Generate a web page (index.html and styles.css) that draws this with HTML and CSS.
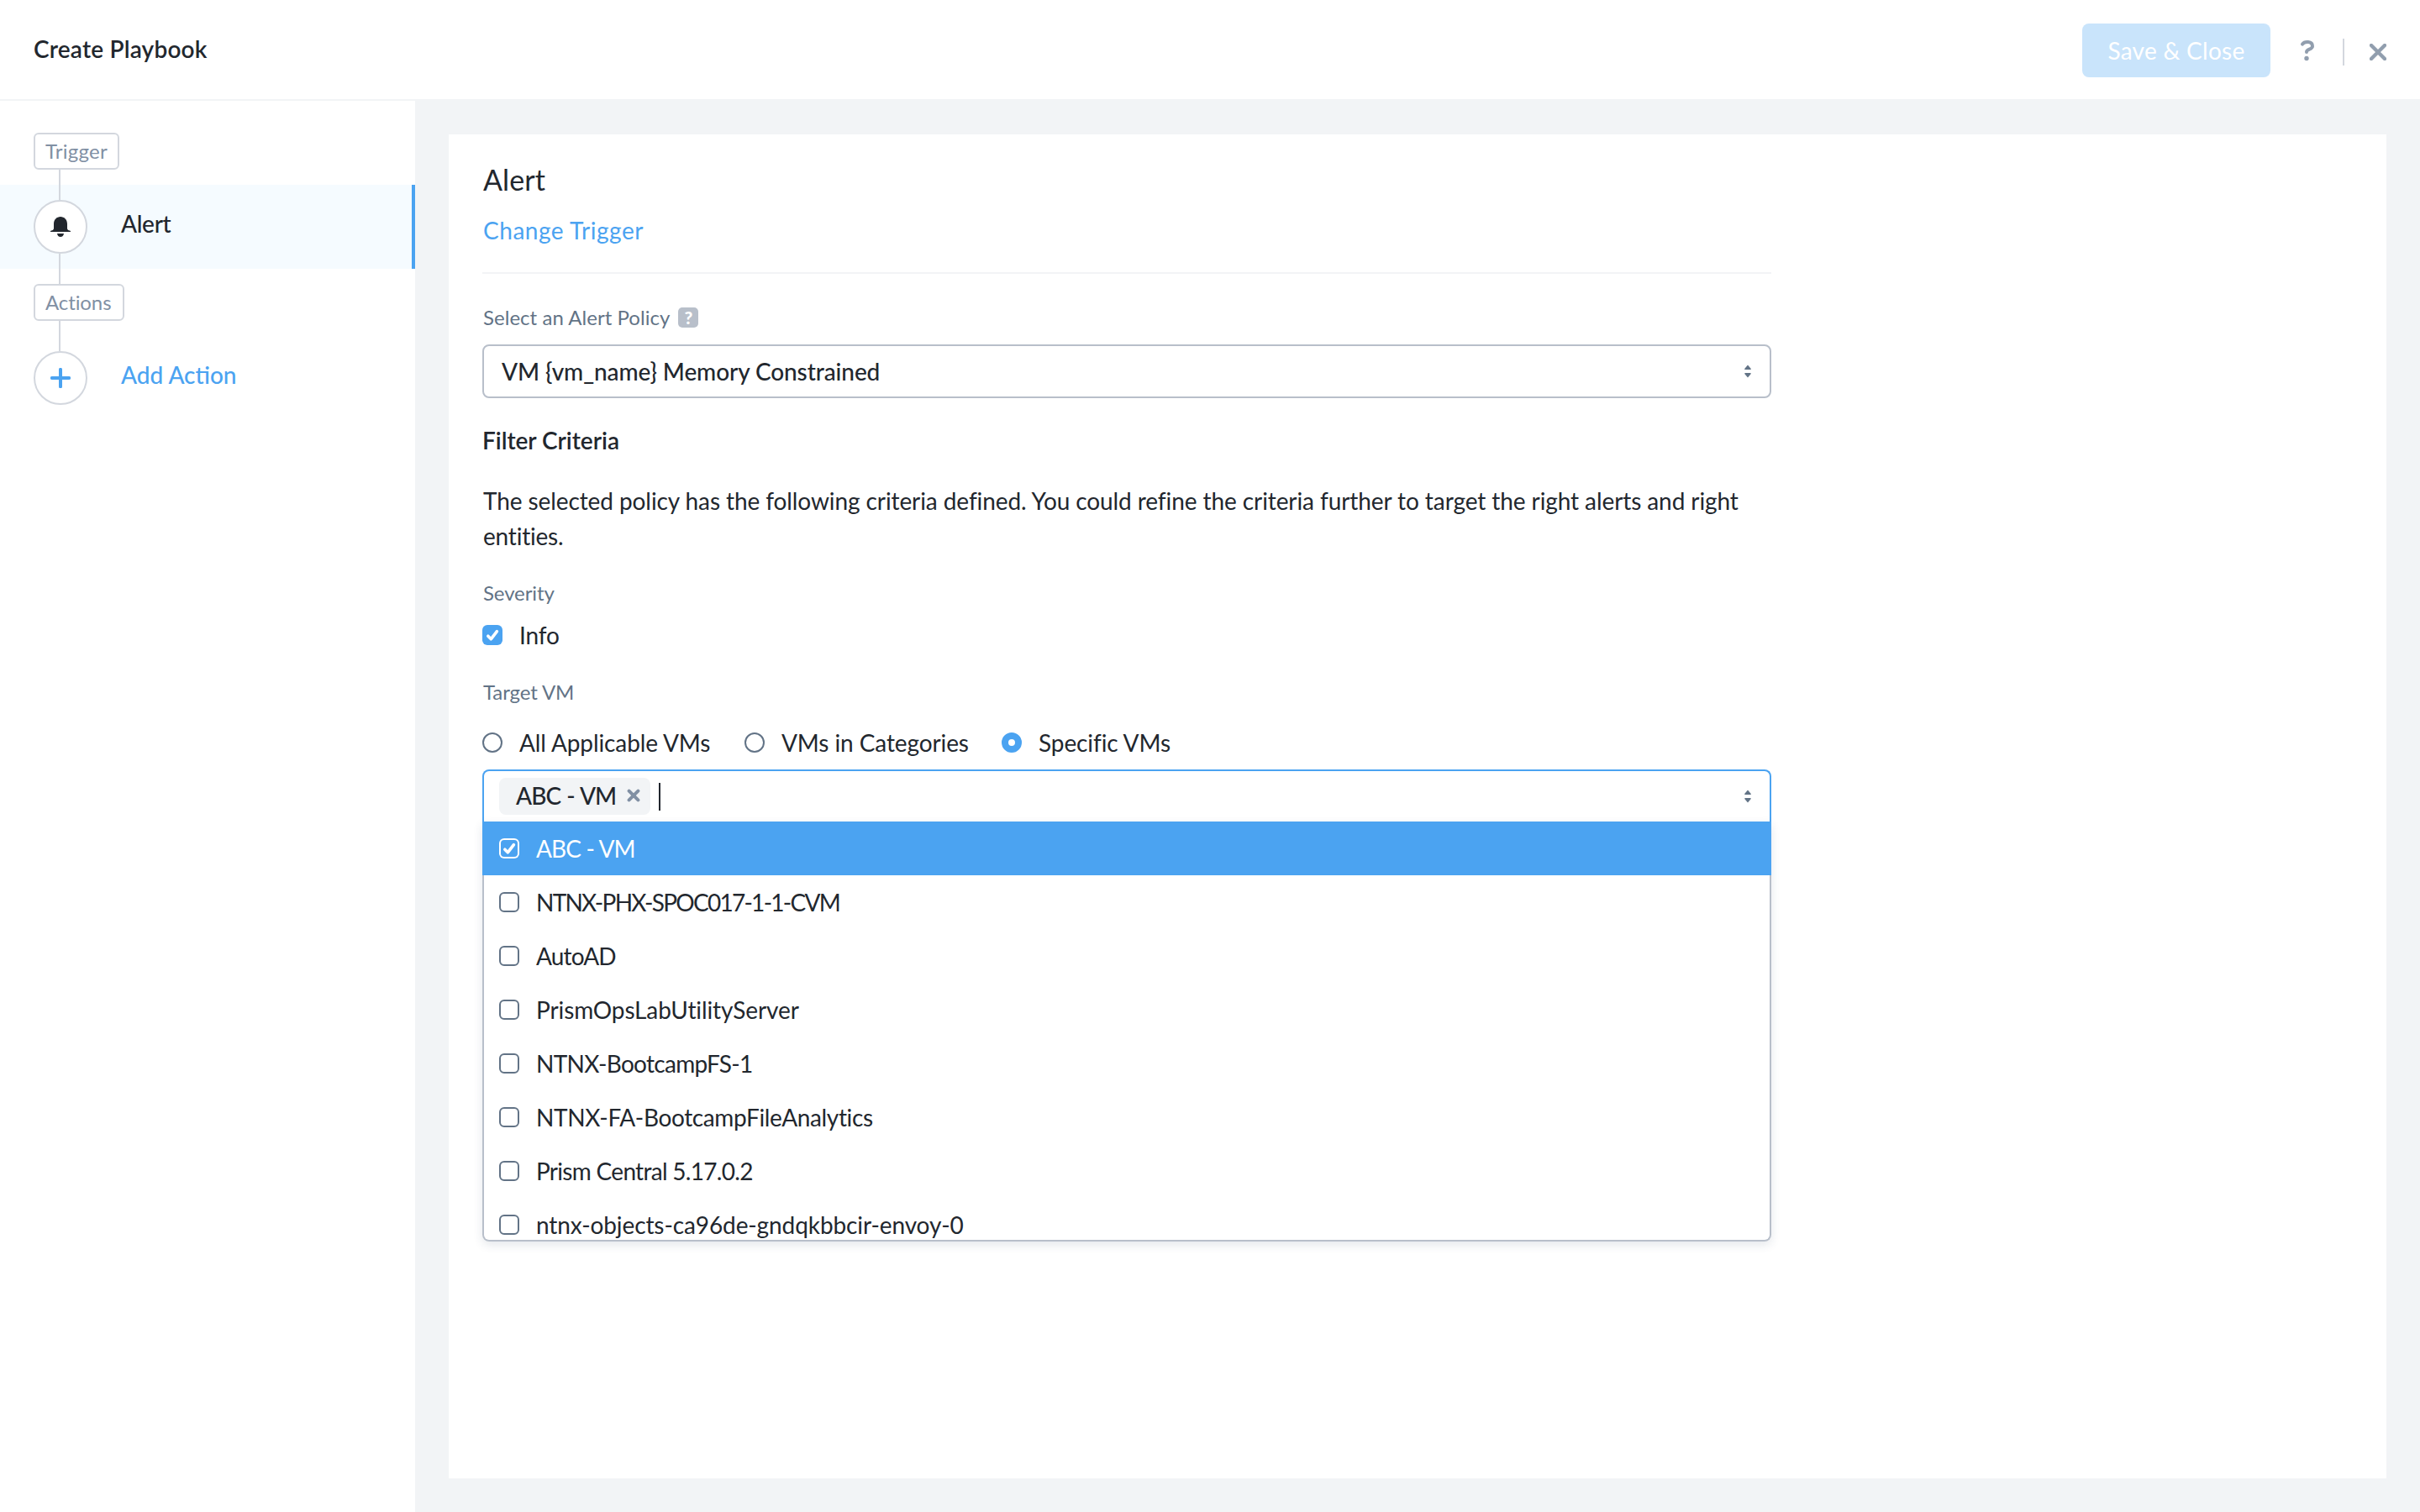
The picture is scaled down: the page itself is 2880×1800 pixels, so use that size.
FILE: index.html
```html
<!DOCTYPE html>
<html lang="en">
<head>
<meta charset="utf-8">
<title>Create Playbook</title>
<link rel="stylesheet" href="styles.css">
</head>
<body>
<svg class="sprite" width="0" height="0">
  <symbol id="sorter" viewBox="0 0 8 16"><path d="M4 0.6 7.6 4.8Q8.2 6 7 6H1Q-.2 6 .4 4.8ZM4 15.4 7.6 11.2Q8.2 10 7 10H1Q-.2 10 .4 11.2Z"/></symbol>
  <symbol id="tick" viewBox="0 0 24 24"><path d="M6.8 13.2 10.3 16.8 17.4 7.6"/></symbol>
</svg>
<div class="app">
  <header class="header">
    <h1 class="header-title">Create Playbook</h1>
    <div class="header-tools">
      <button class="save" disabled>Save &amp; Close</button>
      <svg class="help-icon" viewBox="0 0 20 30"><path d="M4 6.6C6.5 3 16 2.6 16 9 16 13.2 9 12.2 9 16"/><circle cx="9" cy="23.5" r="2.7"/></svg>
      <span class="divider"></span>
      <svg class="close-icon" viewBox="0 0 20 20"><path d="M2 2 18 18M18 2 2 18"/></svg>
    </div>
  </header>
  <div class="body">
    <nav class="sidebar">
      <div class="tag tag-trigger">Trigger</div>
      <div class="line"></div>
      <div class="step step-active">
        <div class="rail">
          <div class="line"></div>
          <div class="node"><svg class="bell" viewBox="0 0 24 24"><path d="M4 14V8.5C4 3.5 7.5 0 12 0S20 3.5 20 8.5V14C20.3 15.5 21.2 16.2 23 16.6 23.8 16.8 24 17.2 24 18H0C0 17.2 .2 16.8 1 16.6 2.8 16.2 3.7 15.5 4 14ZM8 20H16C15.6 22.5 14.3 24 12 24S8.4 22.5 8 20Z"/></svg></div>
          <div class="line"></div>
        </div>
        <span class="step-name step-alert">Alert</span>
      </div>
      <div class="line"></div>
      <div class="tag tag-actions">Actions</div>
      <div class="line"></div>
      <div class="step">
        <div class="rail">
          <div class="line"></div>
          <div class="node"><svg class="plus" viewBox="0 0 24 24"><path d="M12 1.8V22.2M1.8 12H22.2"/></svg></div>
        </div>
        <a class="step-name link">Add Action</a>
      </div>
    </nav>
    <main class="main">
      <section class="panel">
        <div class="form">
          <h2 class="title">Alert</h2>
          <a class="change link">Change Trigger</a>
          <hr class="rule">
          <div class="label label-policy">Select an Alert Policy <span class="hint">?</span></div>
          <div class="select">
            <span class="select-value">VM {vm_name} Memory Constrained</span>
            <svg class="sorter"><use href="#sorter"/></svg>
          </div>
          <h3 class="subtitle">Filter Criteria</h3>
          <p class="text">The selected policy has the following criteria defined. You could refine the criteria further to target the right alerts and right <span class="text-end">entities.</span></p>
          <div class="label label-severity">Severity</div>
          <div class="choice severity-row">
            <svg class="box box-on"><use href="#tick"/></svg>
            <span>Info</span>
          </div>
          <div class="label label-target">Target VM</div>
          <div class="radios">
            <div class="choice"><span class="radio"></span><span>All Applicable VMs</span></div>
            <div class="choice"><span class="radio"></span><span>VMs in Categories</span></div>
            <div class="choice"><span class="radio radio-on"></span><span>Specific VMs</span></div>
          </div>
          <div class="combo">
            <div class="combo-input">
              <span class="chip"><span class="chip-text">ABC - VM</span><svg class="chip-x" viewBox="0 0 16 16"><path d="M2.6 2.6 13.4 13.4M13.4 2.6 2.6 13.4"/></svg></span>
              <span class="caret"></span>
              <svg class="sorter"><use href="#sorter"/></svg>
            </div>
            <div class="menu">
              <div class="option option-active"><svg class="box box-outline"><use href="#tick"/></svg><span class="tight">ABC - VM</span></div>
              <div class="menu-list">
                <div class="option"><span class="box"></span><span class="node-name">NTNX-PHX-SPOC017-1-1-CVM</span></div>
                <div class="option"><span class="box"></span><span class="tight">AutoAD</span></div>
                <div class="option"><span class="box"></span><span>PrismOpsLabUtilityServer</span></div>
                <div class="option"><span class="box"></span><span class="fs-name">NTNX-BootcampFS-1</span></div>
                <div class="option"><span class="box"></span><span class="fa-name">NTNX-FA-BootcampFileAnalytics</span></div>
                <div class="option"><span class="box"></span><span class="fs-name">Prism Central 5.17.0.2</span></div>
                <div class="option"><span class="box"></span><span>ntnx-objects-ca96de-gndqkbbcir-envoy-0</span></div>
              </div>
            </div>
          </div>
        </div>
      </section>
    </main>
  </div>
</div>
</body>
</html>
```
FILE: styles.css
```css
* { box-sizing: border-box; }
body {
  margin: 0;
  font: 400 28px/34px Lato, "Liberation Sans", sans-serif;
  letter-spacing: -0.1px;
  color: #22272e;
  background: #fff;
}
h1, h2, h3, p { margin: 0; }
svg { display: block; flex: none; }
.sprite { position: absolute; }
.app { height: 1800px; display: flex; flex-direction: column; overflow: hidden; }
.link { color: #4ba3f1; }

/* Header */
.header {
  height: 120px;
  flex: none;
  display: flex;
  justify-content: space-between;
  align-items: center;
  padding: 0 40px;
  border-bottom: 2px solid #f2f4f6;
}
.header-title { font-size: 28px; font-weight: 600; letter-spacing: 0.2px; padding-bottom: 2px; }
.header-tools { display: flex; align-items: center; }
.save {
  width: 224px;
  height: 64px;
  margin: 2px 34px 0 0;
  border: 0;
  border-radius: 8px;
  background: #c9e4fb;
  color: #fff;
  font: inherit;
  letter-spacing: 0.27px;
}
.help-icon { width: 20px; height: 30px; margin: 4px 32px 0 0; fill: none; stroke: #919eae; stroke-width: 4; stroke-linecap: round; }
.help-icon circle { fill: #919eae; stroke: none; }
.divider { width: 2px; height: 32px; margin: 6px 30px 0 0; background: #d3d7de; }
.close-icon { width: 20px; height: 20px; margin-top: 6px; fill: none; stroke: #919eae; stroke-width: 4.4; stroke-linecap: round; }

.body { flex: 1; display: flex; min-height: 0; }

/* Steps */
.sidebar { width: 494px; flex: none; padding-top: 38px; }
.tag {
  height: 44px;
  margin-left: 40px;
  padding-left: 12px;
  border: 2px solid #d3d7de;
  border-radius: 6px;
  font-size: 24px;
  line-height: 40px;
  color: #8190a4;
}
.tag-trigger { width: 102px; letter-spacing: 0.25px; }
.tag-actions { width: 108px; letter-spacing: -0.1px; }
.line { width: 2px; height: 18px; margin-left: 70px; background: #d3d7de; }
.step { display: flex; align-items: flex-start; gap: 40px; height: 100px; padding-left: 40px; }
.step-active { background: #f5fbff; border-right: 4px solid #4ba3f1; }
.rail { width: 64px; }
.rail .line { margin-left: 30px; }
.node {
  width: 64px;
  height: 64px;
  display: flex;
  align-items: center;
  justify-content: center;
  border: 2px solid #d3d7de;
  border-radius: 50%;
  background: #fff;
}
.bell { width: 24px; height: 24px; fill: #22272e; }
.plus { width: 24px; height: 24px; stroke: #4ba3f1; stroke-width: 4; stroke-linecap: round; }
.step-name { font-weight: 500; line-height: 92px; letter-spacing: 0; }
.step-alert { letter-spacing: -0.3px; }

/* Form */
.main { flex: 1; padding: 40px; background: #f2f4f6; }
.panel { height: 1600px; padding: 34px 40px 0; background: #fff; }
.form { width: 1534px; display: flex; flex-direction: column; }
.title { padding-left: 1px; font-size: 34px; font-weight: 400; line-height: 40px; letter-spacing: 0.1px; }
.change { margin-top: 23px; padding-left: 1px; letter-spacing: 0.53px; }
.rule { width: 100%; height: 2px; margin: 33px 0 0; border: 0; background: #f2f4f6; }
.label { height: 24px; padding-left: 1px; font-size: 24px; line-height: 26px; color: #627386; }
.label-policy { display: flex; gap: 10px; margin-top: 39px; letter-spacing: 0.04px; }
.hint {
  width: 24px;
  height: 24px;
  margin-top: 1px;
  border-radius: 5px;
  background: #b8bfca;
  color: #fff;
  font-size: 21px;
  font-weight: 900;
  line-height: 24px;
  text-align: center;
}
.select {
  display: flex;
  align-items: center;
  justify-content: space-between;
  height: 64px;
  margin-top: 21px;
  padding: 0 22px 0 21px;
  border: 2px solid #b8bfca;
  border-radius: 8px;
}
.select-value { font-weight: 500; letter-spacing: -0.09px; }
.sorter { width: 8px; height: 16px; fill: #627386; }
.subtitle { margin-top: 33px; font-size: 28px; font-weight: 600; letter-spacing: -0.03px; }
.text { margin-top: 34px; padding-left: 1px; line-height: 42px; letter-spacing: -0.09px; }
.text-end { letter-spacing: -0.2px; }
.label-severity { margin-top: 34px; }
.severity-row { margin-top: 27px; }
.label-target { margin-top: 43px; }
.choice { display: flex; gap: 20px; height: 24px; line-height: 24px; }
.radios { display: grid; grid-template-columns: 312px 306px auto; margin-top: 37px; }
.radio { width: 24px; height: 24px; border: 2px solid #627386; border-radius: 50%; }
.radio-on { border: 8px solid #4ba3f1; }
.box { width: 24px; height: 24px; flex: none; border: 2px solid #627386; border-radius: 6px; }
.box-on, .box-outline { border: 0; fill: none; stroke: #fff; stroke-width: 3.6; stroke-linecap: round; stroke-linejoin: round; }
.box-on { background: #4ba3f1; }
.box-outline { box-shadow: inset 0 0 0 2px #fff; }

/* Combo box */
.combo { margin-top: 20px; }
.combo-input {
  display: flex;
  align-items: center;
  height: 62px;
  padding: 0 22px 0 18px;
  border: 2px solid #4ba3f1;
  border-bottom: 0;
  border-radius: 8px 8px 0 0;
}
.combo-input .sorter { margin-left: auto; }
.chip {
  display: flex;
  align-items: center;
  justify-content: space-between;
  width: 180px;
  height: 44px;
  padding: 0 12px 2px 20px;
  border-radius: 8px;
  background: #f2f4f6;
}
.chip-text { font-weight: 500; line-height: 40px; letter-spacing: -0.92px; word-spacing: 1px; white-space: nowrap; }
.chip-x { width: 16px; height: 16px; stroke: #8190a4; stroke-width: 4; stroke-linecap: round; }
.caret { width: 2px; height: 33px; margin-left: 10px; background: #22272e; }
.menu { border-radius: 0 0 8px 8px; box-shadow: 0 4px 12px rgba(34, 60, 90, 0.12); }
.option { display: flex; gap: 20px; height: 64px; padding: 20px 0 0 18px; line-height: 24px; white-space: nowrap; }
.option-active { padding-left: 20px; background: #4ba3f1; color: #fff; }
.menu-list { height: 436px; overflow: hidden; border: 2px solid #b8bfca; border-top: 0; border-radius: 0 0 8px 8px; }
.tight { letter-spacing: -0.85px; }
.node-name { letter-spacing: -1.73px; }
.fs-name { letter-spacing: -0.7px; }
.fa-name { letter-spacing: -0.36px; }
```
